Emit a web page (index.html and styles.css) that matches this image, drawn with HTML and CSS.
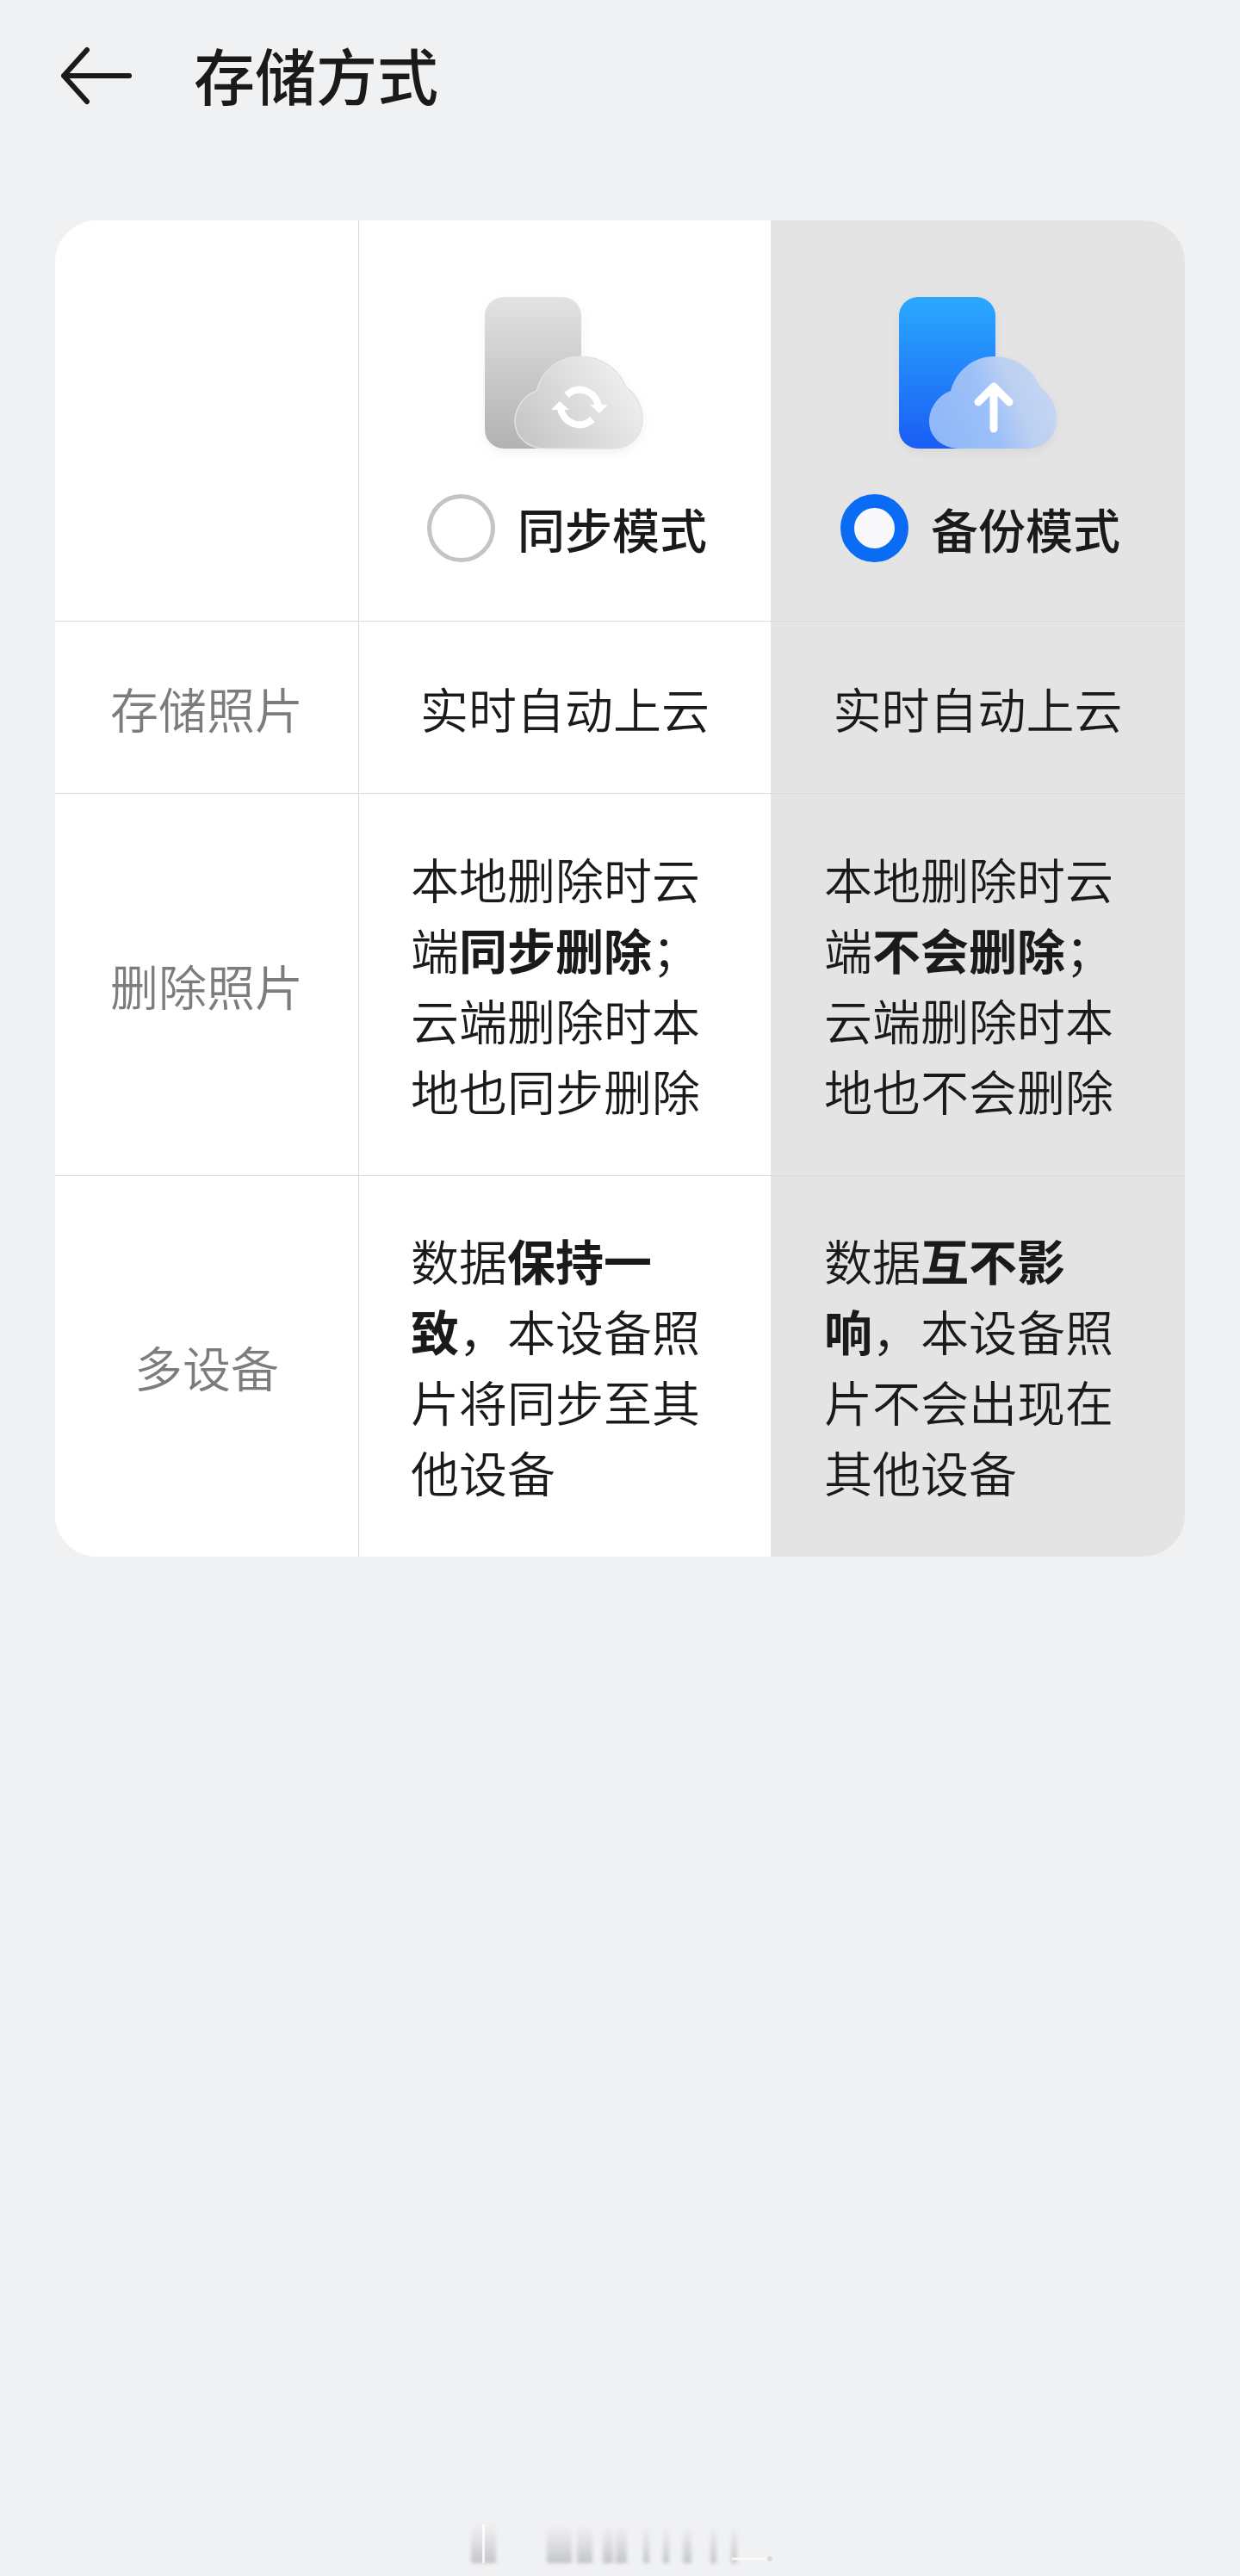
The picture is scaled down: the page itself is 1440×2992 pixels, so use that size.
FILE: index.html
```html
<!DOCTYPE html>
<html lang="zh-CN">
<head>
  <meta charset="utf-8">
  <title>存储方式</title>
  <link rel="stylesheet" href="styles.css">
</head>
<body>
  <header class="top-bar">
    <svg class="back-icon" viewBox="0 0 84 68" aria-hidden="true">
      <path d="M31 4 L4 34 L31 64 M4 34 H80"/>
    </svg>
    <h1>存储方式</h1>
  </header>

  <svg class="svg-defs" width="0" height="0" aria-hidden="true">
    <defs>
      <linearGradient id="phone-grey" x1="0" y1="0" x2="0" y2="1">
        <stop offset="0" stop-color="#e2e2e2"/>
        <stop offset="1" stop-color="#b2b2b2"/>
      </linearGradient>
      <linearGradient id="cloud-grey" x1="0" y1="0.8" x2="1" y2="0.3">
        <stop offset="0" stop-color="#c6c6c6"/>
        <stop offset="0.55" stop-color="#dedede"/>
        <stop offset="1" stop-color="#f2f2f2"/>
      </linearGradient>
      <linearGradient id="phone-blue" x1="0" y1="0" x2="0" y2="1">
        <stop offset="0" stop-color="#2aa9ff"/>
        <stop offset="1" stop-color="#1a5df5"/>
      </linearGradient>
      <linearGradient id="cloud-blue" x1="0" y1="0.7" x2="1" y2="0.4">
        <stop offset="0" stop-color="#90b8f8"/>
        <stop offset="0.45" stop-color="#9cc0f8"/>
        <stop offset="0.7" stop-color="#bcd0f2"/>
        <stop offset="1" stop-color="#c6d6f2"/>
      </linearGradient>
    </defs>
  </svg>

  <main class="compare-card">
    <div class="cell cell-head"></div>

    <div class="cell cell-head cell-mid">
      <svg class="mode-icon" viewBox="0 0 184 180" aria-hidden="true">
        <rect width="112" height="176" rx="22" fill="url(#phone-grey)"/>
        <path d="M70 176 C50 176 35 162 35 145 C35 128 46 114 60 109 C66 86 86 69 110 69 C136 69 156 84 164 105 C176 112 183 128 183 142 C183 162 168 176 150 176 Z" fill="url(#cloud-grey)" stroke="#e2e2e2" stroke-width="1.5"/>
        <path d="M95 114 C108 102 127 108 132 126 M125 142 C112 154 93 148 88 130" fill="none" stroke="#fff" stroke-width="8"/>
        <path d="M122 125 H143 L133 135 Z M98 131 H77 L87 121 Z" fill="#fff"/>
      </svg>
      <div class="mode-pick">
        <span class="radio"></span>
        <span class="mode-name">同步模式</span>
      </div>
    </div>

    <div class="cell cell-head cell-on">
      <svg class="mode-icon icon-on" viewBox="0 0 184 180" aria-hidden="true">
        <rect width="112" height="176" rx="22" fill="url(#phone-blue)"/>
        <path d="M70 176 C50 176 35 162 35 145 C35 128 46 114 60 109 C66 86 86 69 110 69 C136 69 156 84 164 105 C176 112 183 128 183 142 C183 162 168 176 150 176 Z" fill="url(#cloud-blue)"/>
        <path d="M110 153 V106 M92 122 L110 104 L128 122" fill="none" stroke="#fff" stroke-width="9" stroke-linecap="round" stroke-linejoin="round"/>
      </svg>
      <div class="mode-pick">
        <span class="radio radio-on"></span>
        <span class="mode-name">备份模式</span>
      </div>
    </div>

    <div class="cell cell-label">存储照片</div>
    <div class="cell cell-mid cell-center">实时自动上云</div>
    <div class="cell cell-on cell-center">实时自动上云</div>

    <div class="cell cell-label">删除照片</div>
    <div class="cell cell-mid">
      <div class="lines">
        <span>本地删除时云</span>
        <span>端<b>同步删除</b>；</span>
        <span>云端删除时本</span>
        <span>地也同步删除</span>
      </div>
    </div>
    <div class="cell cell-on">
      <div class="lines">
        <span>本地删除时云</span>
        <span>端<b>不会删除</b>；</span>
        <span>云端删除时本</span>
        <span>地也不会删除</span>
      </div>
    </div>

    <div class="cell cell-label cell-last">多设备</div>
    <div class="cell cell-mid cell-last">
      <div class="lines">
        <span>数据<b>保持一</b></span>
        <span><b>致</b>，本设备照</span>
        <span>片将同步至其</span>
        <span>他设备</span>
      </div>
    </div>
    <div class="cell cell-on cell-last">
      <div class="lines">
        <span>数据<b>互不影</b></span>
        <span><b>响</b>，本设备照</span>
        <span>片不会出现在</span>
        <span>其他设备</span>
      </div>
    </div>
  </main>

  <footer class="mark">
    <svg viewBox="0 0 600 72" width="600" height="72" aria-hidden="true">
      <defs>
        <linearGradient id="mark-fade" x1="0" y1="0" x2="0" y2="1">
          <stop offset="0" stop-color="#c8c9cc" stop-opacity="0"/>
          <stop offset="1" stop-color="#b8b9bc" stop-opacity="0.8"/>
        </linearGradient>
        <filter id="mark-blur"><feGaussianBlur stdDeviation="2"/></filter>
      </defs>
      <g fill="url(#mark-fade)" filter="url(#mark-blur)">
        <rect x="147" y="10" width="29" height="47"/>
        <rect x="235" y="12" width="29" height="45"/>
        <rect x="270" y="12" width="18" height="45"/>
        <rect x="300" y="12" width="12" height="45"/>
        <rect x="315" y="12" width="13" height="45"/>
        <rect x="347" y="12" width="7" height="45"/>
        <rect x="370" y="12" width="7" height="45"/>
        <rect x="393" y="12" width="10" height="45"/>
        <rect x="425" y="12" width="7" height="45"/>
        <rect x="449" y="12" width="7" height="45"/>
      </g>
      <rect x="160" y="12" width="3" height="45" fill="#fff" opacity="0.8"/>
      <path d="M450 52 H493" stroke="#fafafa" stroke-width="3"/>
      <circle cx="494" cy="52" r="3" fill="#d8d8da"/>
    </svg>
  </footer>
</body>
</html>
```

FILE: styles.css
```css
* {
  box-sizing: border-box;
}

body {
  margin: 0;
  background-color: #f0f1f3;
  color: #1a1a1a;
  font-family: "Noto Sans CJK SC", "Noto Sans", sans-serif;
  font-size: 56px;
  font-weight: 350;
  line-height: 82px;
}

.top-bar {
  display: flex;
  align-items: center;
  height: 176px;
  padding-left: 70px;
}

.top-bar h1 {
  margin: 0 0 6px 71px;
  font-size: 71px;
  font-weight: 500;
  line-height: 96px;
}

.back-icon {
  width: 84px;
  height: 68px;
  fill: none;
  stroke: #1a1a1a;
  stroke-width: 6;
  stroke-linecap: round;
  stroke-linejoin: round;
}

.svg-defs {
  display: block;
  height: 0;
}

.compare-card {
  display: grid;
  grid-template-columns: 352px 479px 481px;
  grid-template-rows: 466px 200px 444px 442px;
  margin: 80px 64px 0;
  background-color: #fff;
  border-radius: 48px;
  overflow: hidden;
}

.cell {
  display: flex;
  align-items: center;
  border-bottom: 1px solid #d8d8d8;
}

.lines {
  margin: 0 0 2px 60px;
}

.lines span {
  display: block;
  white-space: nowrap;
}

.lines b {
  font-weight: 700;
}

.cell-mid {
  border-left: 1px solid #d8d8d8;
}

.cell-on {
  background-color: #e4e4e4;
  border-bottom-color: #d9d9d9;
}

.cell-on .lines {
  margin-left: 62px;
}

.cell-center {
  justify-content: center;
}

.cell-label {
  justify-content: center;
  color: #7c7c7c;
}

.cell-last {
  border-bottom: none;
}

.cell-head {
  flex-direction: column;
  align-items: flex-start;
  padding: 89px 0 0 81px;
}

.cell-head.cell-mid {
  padding-left: 79px;
}

.mode-icon {
  display: block;
  width: 184px;
  height: 180px;
  margin-left: 67px;
  filter: drop-shadow(0 4px 6px rgba(0, 0, 0, 0.05));
}

.icon-on {
  margin-left: 68px;
}

.mode-pick {
  display: flex;
  align-items: center;
  gap: 26px;
  margin-top: 47px;
  font-size: 55px;
  font-weight: 500;
}

.radio {
  width: 79px;
  height: 79px;
  border: 5px solid #c4c4c4;
  border-radius: 50%;
}

.radio-on {
  border: 16px solid #0a6cf5;
  background-color: #f8f8fa;
}

.mark {
  display: flex;
  margin: 1112px 0 0 400px;
  height: 72px;
}
```
